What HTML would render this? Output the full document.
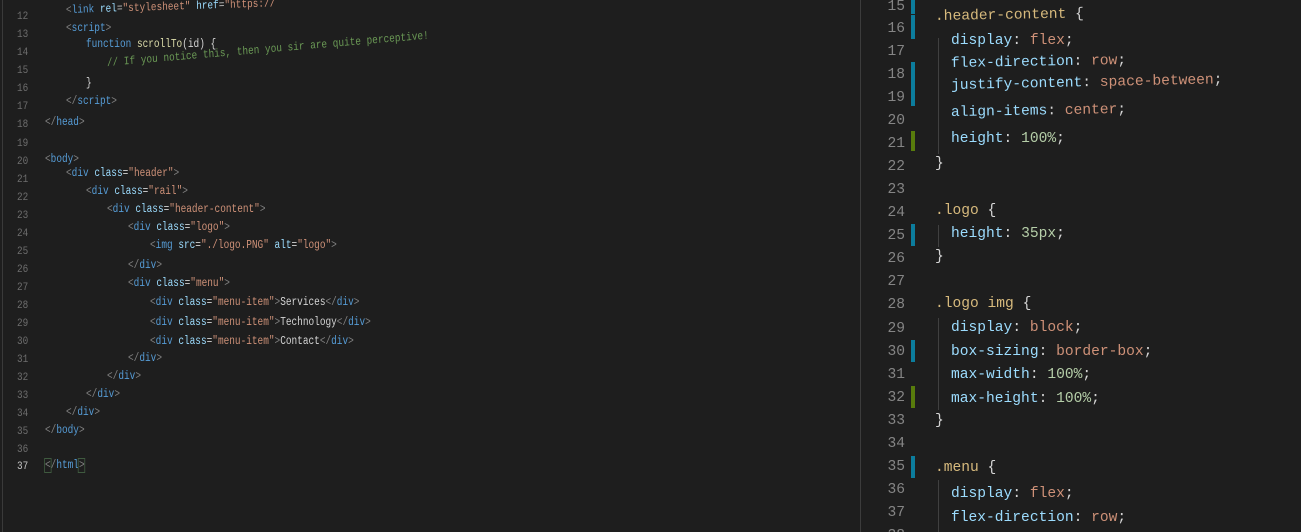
<!DOCTYPE html>
<html><head><meta charset="utf-8"><style>
html,body{margin:0;padding:0;background:#1e1e1e;width:1301px;height:532px;overflow:hidden;position:relative}
.l{position:absolute;font-family:"Liberation Mono",monospace;font-size:11.5px;white-space:pre;color:#d4d4d4;line-height:14px;transform:scaleX(0.82);transform-origin:left}
.n{position:absolute;font-family:"Liberation Mono",monospace;font-size:11px;color:#6e6e6e;line-height:14px;left:17px;transform:scaleX(0.85);transform-origin:left}
.r{position:absolute;font-family:"Liberation Mono",monospace;font-size:14.6px;white-space:pre;color:#d4d4d4;line-height:18px;left:935px}
.rn{position:absolute;font-family:"Liberation Mono",monospace;font-size:14.6px;color:#858585;line-height:18px;width:40px;text-align:right;left:865px}
.b{color:#808080}.t{color:#569cd6}.a{color:#9cdcfe}.s{color:#ce9178}.c{color:#6a9955}.f{color:#dcdcaa}
.sel{color:#d7ba7d}.p{color:#9cdcfe}.v{color:#ce9178}.num{color:#b5cea8}
.bar{position:absolute;left:911px;width:4px;height:22px;background:#0c7d9d}
.g{background:#587c0c}
</style></head><body>
<div style="position:absolute;left:2px;top:0;width:1px;height:532px;background:#3a3a3a"></div>
<div style="position:absolute;left:860px;top:0;width:1px;height:532px;background:#3c3c3c"></div>

<div class="n" style="top:10px">12</div><div class="l" style="left:66px;top:4px;transform:scaleX(0.82) rotate(-1.5deg)"><span class="b">&lt;</span><span class="t">link</span> <span class="a">rel</span>=<span class="s">"stylesheet"</span> <span class="a">href</span>=<span class="s">"https://</span></div>
<div class="n" style="top:28px">13</div><div class="l" style="left:66px;top:22px"><span class="b">&lt;</span><span class="t">script</span><span class="b">&gt;</span></div>
<div class="n" style="top:46px">14</div><div class="l" style="left:86px;top:38px"><span class="t">function</span> <span class="f">scrollTo</span>(id) {</div>
<div class="l" style="left:107px;top:57px;transform:scaleX(0.82) rotate(-4deg)"><span class="c">// If you notice this, then you sir are quite perceptive!</span></div>
<div class="n" style="top:64px">15</div>
<div class="n" style="top:82px">16</div><div class="l" style="left:86px;top:77px">}</div>
<div class="n" style="top:100px">17</div><div class="l" style="left:66px;top:95px"><span class="b">&lt;/</span><span class="t">script</span><span class="b">&gt;</span></div>
<div class="n" style="top:118px">18</div><div class="l" style="left:45px;top:116px"><span class="b">&lt;/</span><span class="t">head</span><span class="b">&gt;</span></div>
<div class="n" style="top:137px">19</div>
<div class="n" style="top:155px">20</div><div class="l" style="left:45px;top:153px"><span class="b">&lt;</span><span class="t">body</span><span class="b">&gt;</span></div>
<div class="n" style="top:173px">21</div><div class="l" style="left:66px;top:167px"><span class="b">&lt;</span><span class="t">div</span> <span class="a">class</span>=<span class="s">"header"</span><span class="b">&gt;</span></div>
<div class="n" style="top:191px">22</div><div class="l" style="left:86px;top:185px"><span class="b">&lt;</span><span class="t">div</span> <span class="a">class</span>=<span class="s">"rail"</span><span class="b">&gt;</span></div>
<div class="n" style="top:209px">23</div><div class="l" style="left:107px;top:203px"><span class="b">&lt;</span><span class="t">div</span> <span class="a">class</span>=<span class="s">"header-content"</span><span class="b">&gt;</span></div>
<div class="n" style="top:227px">24</div><div class="l" style="left:128px;top:221px"><span class="b">&lt;</span><span class="t">div</span> <span class="a">class</span>=<span class="s">"logo"</span><span class="b">&gt;</span></div>
<div class="n" style="top:245px">25</div><div class="l" style="left:150px;top:239px"><span class="b">&lt;</span><span class="t">img</span> <span class="a">src</span>=<span class="s">"./logo.PNG"</span> <span class="a">alt</span>=<span class="s">"logo"</span><span class="b">&gt;</span></div>
<div class="n" style="top:263px">26</div><div class="l" style="left:128px;top:259px"><span class="b">&lt;/</span><span class="t">div</span><span class="b">&gt;</span></div>
<div class="n" style="top:281px">27</div><div class="l" style="left:128px;top:277px"><span class="b">&lt;</span><span class="t">div</span> <span class="a">class</span>=<span class="s">"menu"</span><span class="b">&gt;</span></div>
<div class="n" style="top:299px">28</div><div class="l" style="left:150px;top:296px"><span class="b">&lt;</span><span class="t">div</span> <span class="a">class</span>=<span class="s">"menu-item"</span><span class="b">&gt;</span>Services<span class="b">&lt;/</span><span class="t">div</span><span class="b">&gt;</span></div>
<div class="n" style="top:317px">29</div><div class="l" style="left:150px;top:316px"><span class="b">&lt;</span><span class="t">div</span> <span class="a">class</span>=<span class="s">"menu-item"</span><span class="b">&gt;</span>Technology<span class="b">&lt;/</span><span class="t">div</span><span class="b">&gt;</span></div>
<div class="n" style="top:335px">30</div><div class="l" style="left:150px;top:335px"><span class="b">&lt;</span><span class="t">div</span> <span class="a">class</span>=<span class="s">"menu-item"</span><span class="b">&gt;</span>Contact<span class="b">&lt;/</span><span class="t">div</span><span class="b">&gt;</span></div>
<div class="n" style="top:353px">31</div><div class="l" style="left:128px;top:352px"><span class="b">&lt;/</span><span class="t">div</span><span class="b">&gt;</span></div>
<div class="n" style="top:371px">32</div><div class="l" style="left:107px;top:370px"><span class="b">&lt;/</span><span class="t">div</span><span class="b">&gt;</span></div>
<div class="n" style="top:389px">33</div><div class="l" style="left:86px;top:388px"><span class="b">&lt;/</span><span class="t">div</span><span class="b">&gt;</span></div>
<div class="n" style="top:407px">34</div><div class="l" style="left:66px;top:406px"><span class="b">&lt;/</span><span class="t">div</span><span class="b">&gt;</span></div>
<div class="n" style="top:425px">35</div><div class="l" style="left:45px;top:424px"><span class="b">&lt;/</span><span class="t">body</span><span class="b">&gt;</span></div>
<div class="n" style="top:443px">36</div>
<div class="n" style="top:460px;color:#c6c6c6">37</div><div class="l" style="left:45px;top:459px"><span class="b" style="outline:1px solid #3f5a3f">&lt;</span><span class="b">/</span><span class="t">html</span><span class="b" style="outline:1px solid #3f5a3f">&gt;</span></div>

<div class="bar" style="top:0;height:14px"></div>
<div class="bar" style="top:15px;height:24px"></div>
<div class="bar" style="top:62px;height:44px"></div>
<div class="bar g" style="top:131px;height:20px"></div>
<div class="bar" style="top:224px;height:22px"></div>
<div class="bar" style="top:340px;height:22px"></div>
<div class="bar g" style="top:386px;height:22px"></div>
<div class="bar" style="top:456px;height:22px"></div>
<div style="position:absolute;left:938px;top:38px;width:1px;height:116px;background:#404040"></div>
<div style="position:absolute;left:938px;top:225px;width:1px;height:22px;background:#404040"></div>
<div style="position:absolute;left:938px;top:318px;width:1px;height:92px;background:#404040"></div>
<div style="position:absolute;left:938px;top:480px;width:1px;height:52px;background:#404040"></div>

<div class="rn" style="top:-2px">15</div>
<div class="rn" style="top:20px">16</div><div class="r" style="top:8px;transform:rotate(-1deg);transform-origin:left"><span class="sel">.header-content</span> {</div>
<div class="rn" style="top:43px">17</div><div class="r" style="top:32px;left:951px"><span class="p">display</span>: <span class="v">flex</span>;</div>
<div class="rn" style="top:66px">18</div><div class="r" style="top:55px;left:951px;transform:rotate(-1deg);transform-origin:left"><span class="p">flex-direction</span>: <span class="v">row</span>;</div>
<div class="rn" style="top:89px">19</div><div class="r" style="top:77px;left:951px;transform:rotate(-1.2deg);transform-origin:left"><span class="p">justify-content</span>: <span class="v">space-between</span>;</div>
<div class="rn" style="top:112px">20</div><div class="r" style="top:104px;left:951px;transform:rotate(-1deg);transform-origin:left"><span class="p">align-items</span>: <span class="v">center</span>;</div>
<div class="rn" style="top:135px">21</div><div class="r" style="top:130px;left:951px"><span class="p">height</span>: <span class="num">100%</span>;</div>
<div class="rn" style="top:158px">22</div><div class="r" style="top:155px">}</div>
<div class="rn" style="top:181px">23</div>
<div class="rn" style="top:204px">24</div><div class="r" style="top:202px"><span class="sel">.logo</span> {</div>
<div class="rn" style="top:227px">25</div><div class="r" style="top:225px;left:951px"><span class="p">height</span>: <span class="num">35px</span>;</div>
<div class="rn" style="top:250px">26</div><div class="r" style="top:248px">}</div>
<div class="rn" style="top:273px">27</div>
<div class="rn" style="top:296px">28</div><div class="r" style="top:295px"><span class="sel">.logo img</span> {</div>
<div class="rn" style="top:320px">29</div><div class="r" style="top:319px;left:951px"><span class="p">display</span>: <span class="v">block</span>;</div>
<div class="rn" style="top:343px">30</div><div class="r" style="top:343px;left:951px"><span class="p">box-sizing</span>: <span class="v">border-box</span>;</div>
<div class="rn" style="top:366px">31</div><div class="r" style="top:366px;left:951px"><span class="p">max-width</span>: <span class="num">100%</span>;</div>
<div class="rn" style="top:389px">32</div><div class="r" style="top:390px;left:951px"><span class="p">max-height</span>: <span class="num">100%</span>;</div>
<div class="rn" style="top:412px">33</div><div class="r" style="top:412px">}</div>
<div class="rn" style="top:435px">34</div>
<div class="rn" style="top:458px">35</div><div class="r" style="top:459px"><span class="sel">.menu</span> {</div>
<div class="rn" style="top:481px">36</div><div class="r" style="top:485px;left:951px"><span class="p">display</span>: <span class="v">flex</span>;</div>
<div class="rn" style="top:504px">37</div><div class="r" style="top:509px;left:951px"><span class="p">flex-direction</span>: <span class="v">row</span>;</div>
<div class="rn" style="top:527px">38</div>
</body></html>
